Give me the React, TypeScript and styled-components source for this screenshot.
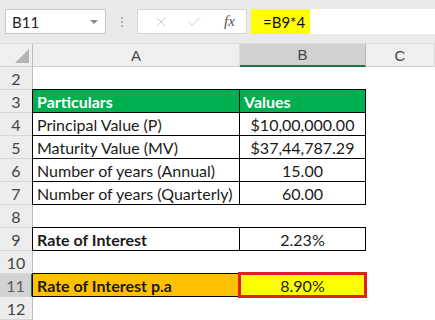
import React from "react";
import styled, { createGlobalStyle } from "styled-components";
import { X, Check } from "lucide-react";

const GlobalStyle = createGlobalStyle`
  html, body {
    margin: 0;
    padding: 0;
    background: #ffffff;
  }
  body {
    font-family: Lato, "Liberation Sans", sans-serif;
  }
`;

const Page = styled.div`
  width: 435px;
  height: 320px;
  overflow: hidden;
  background: #ffffff;
`;

const FormulaBar = styled.div`
  height: 44px;
  background: #eaeaea;
  display: flex;
  align-items: flex-start;
  padding: 9px 0 0 5px;
  box-sizing: border-box;
  border-bottom: 1px solid #dedede;
`;

const NameBox = styled.div`
  width: 101px;
  height: 25px;
  box-sizing: border-box;
  background: #fff;
  border: 1px solid #c8c8c8;
  display: flex;
  align-items: center;
  justify-content: space-between;
  padding: 0 7px 0 6px;
  font-size: 15px;
  color: #222;
`;

const Caret = styled.span`
  width: 0;
  height: 0;
  border-left: 4px solid transparent;
  border-right: 4px solid transparent;
  border-top: 4px solid #8a8a8a;
`;

const Grip = styled.div`
  width: 31px;
  height: 25px;
  display: flex;
  flex-direction: column;
  align-items: center;
  justify-content: center;
  gap: 2px;
  span {
    width: 2px;
    height: 2px;
    background: #b0b0b0;
  }
`;

const IconBox = styled.div`
  width: 110px;
  height: 25px;
  box-sizing: border-box;
  background: #fff;
  border: 1px solid #d4d4d4;
  display: flex;
  align-items: center;
  padding: 0 0 0 15px;
  gap: 17px;
  color: #c0c0c0;
`;

const Fx = styled.span`
  font-family: "Liberation Serif", serif;
  font-style: italic;
  font-size: 15px;
  color: #555;
  margin-left: 5px;
`;

const FormulaInput = styled.div`
  flex: 1;
  height: 25px;
  margin-left: 4px;
  background: #fff;
  display: flex;
  align-items: center;
`;

const Highlight = styled.span`
  background: #ffff00;
  height: 25px;
  width: 59px;
  box-sizing: border-box;
  padding-left: 12px;
  display: flex;
  align-items: center;
  font-size: 15px;
  color: #111;
`;

const Grid = styled.div`
  display: grid;
  grid-template-columns: 33px 207px 126px 1fr;
  grid-auto-rows: 23px;
`;

const Corner = styled.div`
  background: #efefef;
  border-right: 1px solid #bdbdbd;
  border-bottom: 1px solid #d0d0d0;
  position: relative;
  &::after {
    content: "";
    position: absolute;
    right: 3px;
    bottom: 3px;
    border-left: 14px solid transparent;
    border-bottom: 14px solid #b4b4b4;
  }
`;

const ColHead = styled.div<{ $active?: boolean }>`
  background: ${(p) => (p.$active ? "#d2d2d2" : "#efefef")};
  border-right: 1px solid ${(p) => (p.$active ? "#bababa" : "#dcdcdc")};
  border-bottom: ${(p) => (p.$active ? "2px solid #217346" : "1px solid #d0d0d0")};
  display: flex;
  align-items: center;
  justify-content: center;
  font-family: "Liberation Sans", sans-serif;
  font-size: 15px;
  color: #444;
`;

const RowHead = styled.div<{ $active?: boolean }>`
  background: ${(p) => (p.$active ? "#d2d2d2" : "#ededed")};
  border-bottom: 1px solid #d6d6d6;
  border-right: ${(p) => (p.$active ? "2px solid #217346" : "1px solid #bdbdbd")};
  display: flex;
  align-items: center;
  justify-content: center;
  font-size: 16px;
  color: ${(p) => (p.$active ? "#5c5c5c" : "#444")};
`;

const Cell = styled.div<{
  $bg?: string;
  $bold?: boolean;
  $center?: boolean;
  $color?: string;
  $box?: boolean;
}>`
  background: ${(p) => p.$bg || "#fff"};
  color: ${(p) => p.$color || "#1b1b1b"};
  font-weight: ${(p) => (p.$bold ? 700 : 400)};
  font-size: 16px;
  display: flex;
  align-items: center;
  justify-content: ${(p) => (p.$center ? "center" : "flex-start")};
  padding-left: ${(p) => (p.$center ? "0" : "4px")};
  white-space: nowrap;
  overflow: hidden;
  ${(p) =>
    p.$box &&
    `
    border: 1px solid #000;
    margin: -1px 0 0 -1px;
  `}
`;

const Selected = styled(Cell)`
  border: 3px solid #e41e1e;
  margin: -2px -1px -1px -2px;
  position: relative;
  z-index: 1;
`;

type Row = {
  n: number;
  a?: string;
  b?: string;
  kind?: "head" | "box" | "result";
};

const rows: Row[] = [
  { n: 2 },
  { n: 3, a: "Particulars", b: "Values", kind: "head" },
  { n: 4, a: "Principal Value (P)", b: "$10,00,000.00", kind: "box" },
  { n: 5, a: "Maturity Value (MV)", b: "$37,44,787.29", kind: "box" },
  { n: 6, a: "Number of years (Annual)", b: "15.00", kind: "box" },
  { n: 7, a: "Number of years (Quarterly)", b: "60.00", kind: "box" },
  { n: 8 },
  { n: 9, a: "Rate of Interest", b: "2.23%", kind: "box" },
  { n: 10 },
  { n: 11, a: "Rate of Interest p.a", b: "8.90%", kind: "result" },
  { n: 12 },
];

function SheetRow({ row }: { row: Row }) {
  const { n, a, b, kind } = row;
  let cellA: React.ReactNode = <Cell />;
  let cellB: React.ReactNode = <Cell />;
  if (kind === "head") {
    cellA = (
      <Cell $box $bold $bg="#00b050" $color="#fff">
        {a}
      </Cell>
    );
    cellB = (
      <Cell $box $bold $bg="#00b050" $color="#fff">
        {b}
      </Cell>
    );
  } else if (kind === "box") {
    cellA = (
      <Cell $box $bold={n === 9}>
        {a}
      </Cell>
    );
    cellB = (
      <Cell $box $center>
        {b}
      </Cell>
    );
  } else if (kind === "result") {
    cellA = (
      <Cell $box $bold $bg="#ffc000">
        {a}
      </Cell>
    );
    cellB = (
      <Selected $center $bg="#ffff00">
        {b}
      </Selected>
    );
  }
  return (
    <>
      <RowHead $active={n === 11}>{n}</RowHead>
      {cellA}
      {cellB}
      <Cell />
    </>
  );
}

export default function App() {
  return (
    <Page>
      <GlobalStyle />
      <FormulaBar>
        <NameBox>
          B11
          <Caret />
        </NameBox>
        <Grip>
          <span />
          <span />
          <span />
        </Grip>
        <IconBox>
          <X size={16} strokeWidth={1.2} />
          <Check size={16} strokeWidth={1.2} />
          <Fx>fx</Fx>
        </IconBox>
        <FormulaInput>
          <Highlight>=B9*4</Highlight>
        </FormulaInput>
      </FormulaBar>
      <Grid>
        <Corner />
        <ColHead>A</ColHead>
        <ColHead $active>B</ColHead>
        <ColHead>C</ColHead>
        {rows.map((r) => (
          <SheetRow key={r.n} row={r} />
        ))}
      </Grid>
    </Page>
  );
}
